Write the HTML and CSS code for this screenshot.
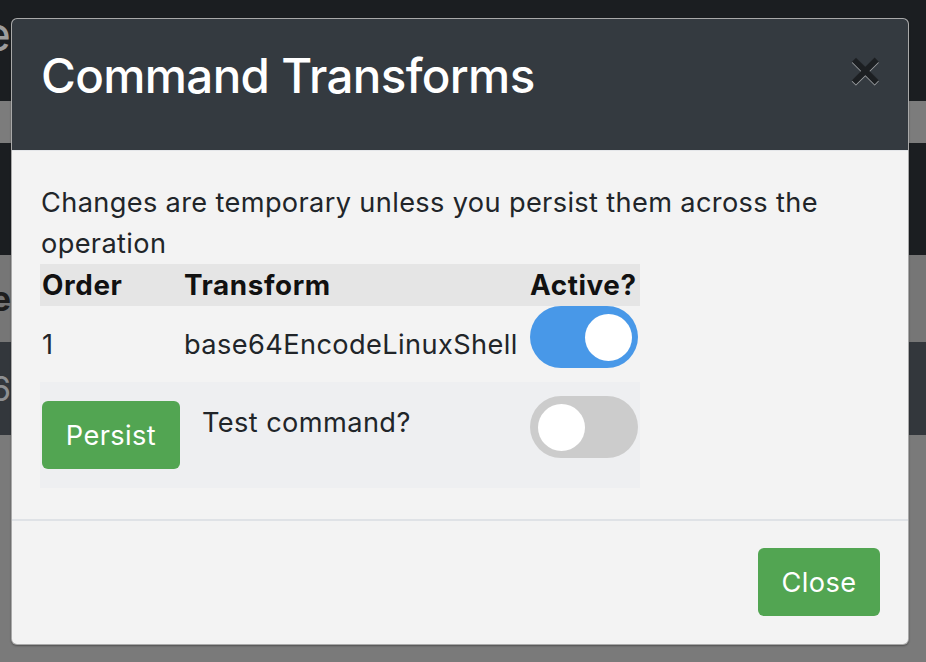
FILE: index.html
```html
<!DOCTYPE html>
<html lang="en">
<head>
<meta charset="utf-8">
<title>Command Transforms</title>
<link rel="stylesheet" href="styles.css">
</head>
<body>
<div class="page">
  <div class="band dark b1">
    <div class="edge"><span class="heading-text">Change</span></div>
    <div class="peek">Operation <span class="muted">Profile: default (linux)</span> <span class="green">Running</span> <span class="muted">of 2</span> <span class="green">Linux</span></div>
  </div>
  <div class="band gray b2"></div>
  <div class="band dark b3"></div>
  <div class="band gray b4">
    <div class="edge"><span class="bold-text">Name</span></div>
  </div>
  <div class="band dark2 b5">
    <div class="edge"><span class="num-text">16</span></div>
  </div>
  <div class="band gray b6"></div>
</div>

<div class="modal">
  <div class="modal-header">
    <h3 class="modal-title">Command Transforms</h3>
    <button class="close" type="button" aria-label="Close">×</button>
  </div>
  <div class="modal-body">
    <p class="intro">Changes are temporary unless you persist them across the operation</p>
    <table class="transforms">
      <thead>
        <tr class="head-row">
          <th class="c1">Order</th>
          <th class="c2">Transform</th>
          <th class="c3">Active?</th>
        </tr>
      </thead>
      <tbody>
        <tr class="row1">
          <td class="c1">1</td>
          <td class="c2">base64EncodeLinuxShell</td>
          <td class="c3 tog-cell"><span class="switch on"><span class="knob"></span></span></td>
        </tr>
        <tr class="row2">
          <td class="c1 btn-cell"><button class="btn btn-success" type="button">Persist</button></td>
          <td class="c2 test-cell">Test command?</td>
          <td class="c3 tog-cell2"><span class="switch off"><span class="knob"></span></span></td>
        </tr>
      </tbody>
    </table>
  </div>
  <div class="modal-footer">
    <button class="btn btn-success close-btn" type="button">Close</button>
  </div>
</div>
</body>
</html>
```

FILE: styles.css
```css
* { box-sizing: border-box; }

html, body {
  margin: 0;
  padding: 0;
}

body {
  width: 926px;
  height: 662px;
  overflow: hidden;
  background: #787878;
  font-family: Inter, "Noto Sans", "Liberation Sans", sans-serif;
  color: #212529;
}

/* Background page (already dimmed by the backdrop) */
.page {
  display: flex;
  flex-direction: column;
  height: 662px;
}

.band { display: flex; overflow: hidden; }
.dark { background: #1b1e21; }
.gray { background: #7a7a7a; }
.dark2 { background: #33373c; }

.b1 { height: 101px; align-items: flex-start; }
.b2 { height: 42px; background: #7c7c7c; }
.b3 { height: 112px; }
.b4 { height: 87px; background: #767676; align-items: center; }
.b5 { height: 93px; align-items: center; }
.b6 { flex: 1; }

.edge {
  width: 11px;
  flex: 0 0 11px;
  display: flex;
  justify-content: flex-end;
  overflow: hidden;
  white-space: nowrap;
}

.heading-text {
  flex-shrink: 0;
  font-size: 47px;
  line-height: 57px;
  color: #9c9c9c;
  padding-top: 5px;
}

.bold-text {
  flex-shrink: 0;
  font-size: 34px;
  font-weight: 700;
  color: #1e1e1e;
}

.num-text {
  flex-shrink: 0;
  font-size: 34px;
  color: #8d8f92;
}

.peek {
  font-size: 47px;
  line-height: 57px;
  padding-top: 8px;
  padding-left: 150px;
  white-space: nowrap;
  color: #5e5e5e;
}
.peek .muted { color: #4e4e4e; margin-left: 30px; }
.peek .green { color: #1f4a1f; margin-left: 30px; }

/* Modal (overlays the page) */
.modal {
  position: absolute;
  left: 11px;
  top: 18px;
  width: 898px;
  height: 627px;
  display: flex;
  flex-direction: column;
  background: #f3f3f3;
  border: 1px solid rgba(0, 0, 0, 0.3);
  border-radius: 6px;
  box-shadow: 0 1px 2px rgba(0, 0, 0, 0.35);
  overflow: hidden;
}

.modal-header {
  height: 132px;
  flex: 0 0 132px;
  background: #343a40;
  border-bottom: 1px solid #e4e6e9;
  display: flex;
  align-items: flex-start;
  justify-content: space-between;
  padding: 28px 29px 0 29px;
}

.modal-title {
  margin: 0;
  font-size: 47.5px;
  font-weight: 500;
  line-height: 57px;
  color: #ffffff;
  letter-spacing: -0.65px;
}

.close {
  background: none;
  border: 0;
  padding: 0;
  margin: -4px -2px 0 0;
  font-family: "Liberation Sans", Arial, sans-serif;
  font-size: 54px;
  font-weight: 700;
  line-height: 1;
  color: #1c1f22;
  text-shadow: 0 1px 0 rgba(255, 255, 255, 0.55);
  cursor: pointer;
}

.modal-body {
  flex: 0 0 368px;
  padding: 31px 29px 30px 28px;
}

.intro {
  margin: 0;
  font-size: 27.2px;
  line-height: 41px;
  letter-spacing: 0.35px;
  color: #212529;
  padding-left: 1px;
}

.transforms {
  border-collapse: collapse;
  width: 600px;
  font-size: 27.2px;
  line-height: 41px;
  letter-spacing: 0.4px;
}

.transforms th,
.transforms td {
  padding: 0 0 0 2px;
  text-align: left;
}

.c1 { width: 142px; }
.c2 { width: 348px; }
.c3 { width: 110px; padding-left: 0 !important; }

.head-row {
  height: 42px;
  background: #e5e5e5;
}
.head-row th {
  font-size: 27.8px;
  font-weight: 700;
  letter-spacing: 0.6px;
  vertical-align: middle;
  color: #111;
}

.row1 { height: 76px; }
.row1 td { vertical-align: middle; }
.row1 .tog-cell { vertical-align: top; }

.row2 {
  height: 106px;
  background: #eeeff1;
}
.row2 td { vertical-align: middle; }
.row2 .test-cell {
  vertical-align: top;
  padding: 20px 0 0 20px;
}
.row2 .tog-cell2 {
  vertical-align: top;
  padding-top: 14px;
}

.switch {
  display: flex;
  align-items: center;
  width: 108px;
  height: 62px;
  border-radius: 31px;
  padding: 0 7px;
}
.switch.on {
  background: #4898e8;
  justify-content: flex-end;
  padding-right: 6px;
}
.switch.off {
  background: #cccccc;
  justify-content: flex-start;
  padding-left: 8px;
}
.knob {
  width: 47px;
  height: 47px;
  border-radius: 50%;
  background: #ffffff;
}

.btn {
  font-family: Inter, "Noto Sans", "Liberation Sans", sans-serif;
  font-size: 27.2px;
  line-height: 41px;
  letter-spacing: 0.4px;
  color: #ffffff;
  border: 0;
  border-radius: 6px;
  cursor: pointer;
}
.btn-success { background: #52a552; }

.btn-cell .btn {
  width: 138px;
  height: 68px;
  padding: 0;
  display: block;
}

.modal-footer {
  flex: 1;
  border-top: 2px solid #dfe2e6;
  display: flex;
  justify-content: flex-end;
  align-items: flex-start;
  padding: 27px 28px 0 0;
}

.close-btn {
  width: 122px;
  height: 68px;
  padding: 0;
}
```
